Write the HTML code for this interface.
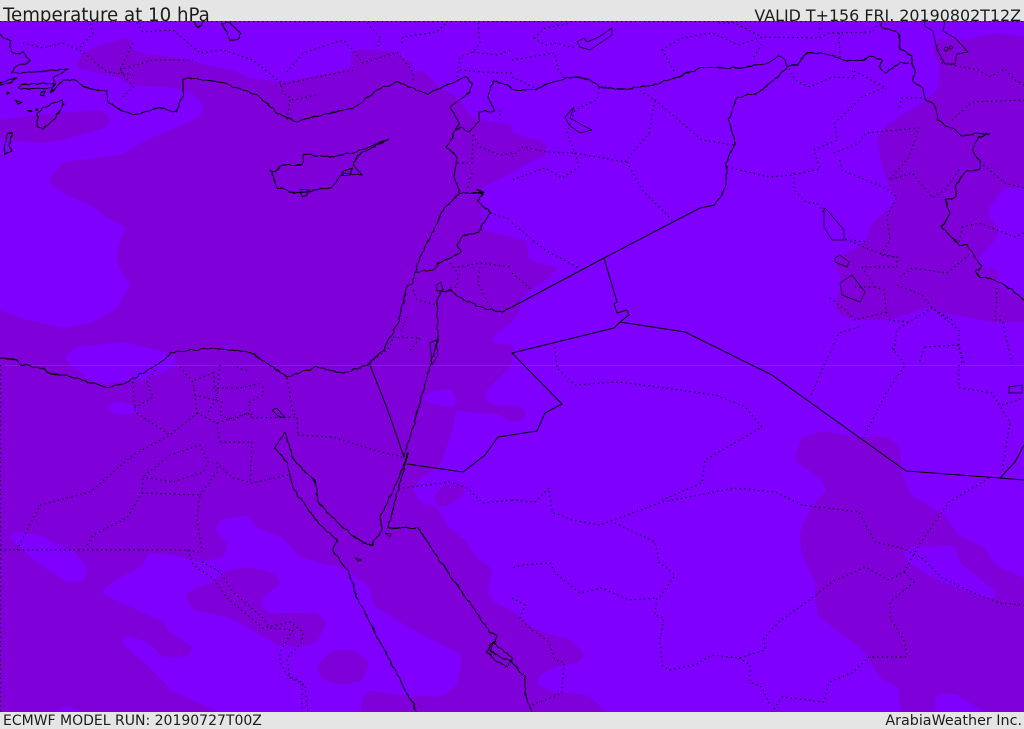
<!DOCTYPE html>
<html><head><meta charset="utf-8"><title>Temperature at 10 hPa</title>
<style>
html,body{margin:0;padding:0;background:#e5e5e5;width:1024px;height:729px;overflow:hidden}
#p{position:relative;width:1024px;height:729px;overflow:hidden;background:#e5e5e5;font-family:"DejaVu Sans",sans-serif;color:#1c1c1c;white-space:nowrap}
#p div{position:absolute;line-height:1}
svg{position:absolute;left:0;top:0;overflow:hidden}
.c{fill:none;stroke:#000;stroke-width:1;stroke-linejoin:round}
.t{fill:none;stroke:#000;stroke-width:.7;stroke-linejoin:round}
.d{fill:none;stroke:#000;stroke-width:1.2;stroke-dasharray:1.2 3.4}
</style></head><body><div id="p">
<div style="left:3px;top:7px;font-size:18.2px">Temperature at 10 hPa</div>
<div style="right:3px;top:7.5px;font-size:15.9px">VALID T+156 FRI. 20190802T12Z</div>
<svg width="1024" height="729" viewBox="0 0 1024 729">
<defs>
<clipPath id="m"><rect x="0" y="21" width="1024" height="691"/></clipPath>
<filter id="s" filterUnits="userSpaceOnUse" x="-30" y="0" width="1084" height="729"><feGaussianBlur stdDeviation="2"/><feComponentTransfer><feFuncA type="linear" slope="8" intercept="-3.5"/></feComponentTransfer></filter>
<filter id="w" filterUnits="userSpaceOnUse" x="-10" y="0" width="1044" height="729"><feTurbulence type="fractalNoise" baseFrequency=".16" numOctaves="2" seed="4"/><feDisplacementMap in="SourceGraphic" scale="3.5" xChannelSelector="R" yChannelSelector="G"/></filter>
</defs>
<g clip-path="url(#m)">
<rect x="0" y="21" width="1024" height="691" fill="#7f00ff"/>
<g fill="#7f00d9" filter="url(#s)">
<path d="M-20,310L0,310 20,318 63,328 93,322 117,308 130,285 117,263 117,247 126,227 107,218 93,207 63,193 48,180 63,162 120,155 147,140 200,117 204,105 190,92 167,87 130,85 117,77 77,68 77,65 80,55 100,45 130,37 132,50 143,53 173,57 207,65 233,70 250,78 280,82 320,75 350,68 353,50 377,50 397,53 415,65 405,72 423,71 433,80 440,88 458,97 470,115 480,120 512,125 512,133 539,140 548,147 545,155 512,172 480,190 483,230 512,237 527,240 529,260 560,268 532,290 520,300 520,310 512,322 492,337 492,343 512,345 517,348 512,353 512,365 485,392 487,402 500,406 512,405 522,407 527,413 522,420 512,422 497,414 477,413 457,410 450,438 440,465 417,482 413,490 420,502 437,507 447,525 467,542 475,557 492,568 488,592 493,602 512,610 532,628 545,633 572,640 585,655 578,663 555,667 538,677 538,685 555,692 588,695 607,712 620,729 -20,729Z"/>
<path d="M-20,120L0,120 33,115 100,110 110,117 107,127 63,140 40,143 0,139 -20,139Z"/>
<path d="M932,50L939,38 962,40 995,33 1024,37 1044,37 1044,187 1024,187 1005,188 989,207 989,217 1000,228 995,240 979,257 982,267 997,270 1000,287 1024,297 1044,297 1044,322 1024,322 992,322 945,313 929,307 889,320 862,320 842,317 835,307 842,283 835,260 865,242 872,223 897,200 889,187 880,157 877,137 889,123 922,103 937,90 940,67Z"/>
<path d="M794,460L802,437 822,431 859,437 889,437 900,448 902,472 910,495 942,513 959,535 985,548 995,565 1024,578 1044,590 1044,729 980,729 959,695 939,693 935,729 905,729 899,698 899,688 880,678 865,652 817,615 815,582 802,555 799,535 810,508 827,490 819,477Z"/>
</g>
<g fill="#7f00ff" filter="url(#s)">
<path d="M100,593L113,582 143,565 148,553 173,555 200,562 223,557 228,545 215,530 220,520 247,515 257,528 283,538 300,557 347,570 370,588 373,605 410,628 462,655 457,685 440,697 400,695 367,690 360,712 358,729 230,729 220,712 173,692 147,665 120,642 127,635 147,642 163,657 187,657 193,648 170,632 163,622Z"/>
<path d="M9,537L20,531 43,537 74,552 88,568 84,581 67,582 46,569 26,553Z"/>
<path d="M106,407L117,401 143,408 130,415 113,413Z"/>
<path d="M64,357L77,347 123,342 170,353 178,365 145,380 97,384 72,367Z"/>
<path d="M421,398L433,391 450,389 456,397 454,408 433,404Z"/>
<path d="M902,553L912,547 955,545 959,562 979,578 997,592 992,600 969,592 942,582 912,565Z"/>
<path d="M936,729L935,695 955,694 985,712 1000,729Z"/>
<path d="M48,716L65,706 85,712 85,729 48,729Z"/>
</g>
<g fill="#7f00d9" filter="url(#s)">
<path d="M185,595L197,587 213,582 227,570 250,567 273,573 282,582 263,597 260,605 270,613 317,613 327,622 317,642 300,647 277,645 247,627 227,617 193,610Z"/>
<path d="M317,665L333,650 353,650 370,662 363,680 343,685 322,680Z"/>
<path d="M433,498L443,485 463,485 465,493 450,505 437,507Z"/>
<path d="M360,729L362,695 400,695 440,697 462,690 470,729Z"/>
</g>
<rect x="0" y="365" width="1024" height="1" fill="#a040ff" opacity=".35"/>
<g class="d">
<path d="M0,21.5H1024M.5,365V712M23,43L43,48 63,43 83,52 107,72 133,75M80,47L93,33 90,23M133,43L120,70 133,87 120,100M137,23L143,32 173,30 200,53 223,50 253,60 280,82 283,93 293,100 317,95M120,70L153,60 193,60M287,72L303,53 343,40 353,50 363,63 397,52 413,72 413,83M280,85L317,77 353,70M290,100L287,120M367,23L380,37 377,50M402,43L403,37 437,32 447,22M457,77L460,57 473,52 480,43 478,22M473,52L497,55 512,50M460,70L483,72 512,73"/>
<path d="M512,60L555,53 557,67 565,80M534,38L545,28 570,23M534,38L545,45 555,43 575,48M662,50L675,73M662,50L682,38 712,33 739,45 762,37 819,38 829,33 872,32 879,23M719,23L735,23 762,37M754,57L762,43M839,33L840,57M820,23L819,33M599,88L597,100 575,110 567,133 575,153 625,162 649,133 655,100 639,90M655,100L702,140 734,145M627,162L642,190 672,220M512,77L535,88M575,153L579,167 562,178 545,168 512,180M512,157L522,147 547,152 575,153"/>
<path d="M727,167L769,177 792,175 820,169 814,150 837,140 835,123 862,97 885,87 852,70 855,78 832,77 810,87 795,80 789,68M794,173L794,190 807,203 817,203 824,213M834,153L859,143 865,133 919,128 909,157 889,180 912,173 932,197M840,160L842,170 885,188 897,197 887,217 890,240 880,255 897,257 897,267 862,267 875,287 884,290 887,317M899,107L902,98 922,98M952,120L972,102 1024,100M937,45L942,63 979,70 989,77 1005,69 1015,80 1024,85M980,162L1005,183 1024,188M959,170L945,190 932,198M865,242L844,239 879,253 895,257M900,277L912,268 947,273 969,255M897,285L922,295 932,308 959,330 959,347 965,365M962,227L979,223 1015,237 1024,233M962,227L959,243M997,288L995,320 1002,320 1012,363M830,298L845,310 855,320 887,312M855,287L875,287M859,327L839,333 824,365 810,398M889,320L909,322 932,308 952,320M894,350L897,330 909,322M892,348L905,365 885,395 865,435M925,347L959,345 962,363M925,347L919,363M959,365L959,388 992,393 1010,422 1002,472M1002,405L1024,398"/>
<path d="M555,347L557,368 575,385 619,382 665,388 715,395 745,407 762,427 705,460 702,483 662,500M512,500L535,502 549,488 552,512 572,520 600,525 662,502 735,488 775,492 802,505 859,512 875,542 902,548 922,558 942,578 972,592 999,603 1024,605M989,478L949,502 919,545 904,572 889,580 865,567 832,582 812,598 779,622 764,638 765,650 739,658 712,655 695,665 669,670 662,665 660,638 664,618 655,615 657,598 629,600 602,588 580,593 555,573 550,563 522,565 512,568M904,572L914,582 890,602 890,618 905,642 907,657 869,657 852,673 829,682 824,702 782,697 772,712M739,658L750,665 750,682 762,687 770,705M615,523L655,542 659,562 675,575 659,598M512,598L525,605 520,618 532,630 549,642 555,660 564,662 562,693 532,705"/>
<path d="M0,550H188L202,553M17,550L40,505 90,492 133,455 170,435 197,413M87,545L93,535 127,518 142,493 143,477 170,455 200,445 208,462 203,472 173,482 143,477M142,493L200,495 197,518 202,552M200,495L217,472 217,463 233,478 252,483 288,475M220,442L252,442 250,482M217,423L220,442M252,418L297,417 298,433M287,378L293,412 297,417M197,413L217,423 248,413 252,418 248,403 263,395 263,383M133,382L135,412 170,435M135,408L153,397 147,382 157,368M180,367L193,382 197,413M195,380L213,373 217,398 208,412M195,395L222,402 220,415 233,420 248,413M220,365L217,398M237,367L250,372M213,388L240,388 263,383M298,435L333,437 367,448 402,457M188,550L193,565 213,578 227,598 263,628 290,622 303,632 302,642 287,658 290,678 305,685 308,712M202,562L220,572 233,592 263,618 270,628 293,630 280,652 280,662 287,675 302,682 302,712M403,488L450,482 467,488 483,503 512,500"/>
<path d="M413,290L417,300 437,305M393,337L420,338 408,353M407,317L400,333M370,363L390,347 393,337M450,263L458,273 457,287 450,288M458,267L480,263 512,267M480,267L478,283 490,307M473,135L472,163 457,163M473,135L480,147 500,155 512,153M472,173L467,190M500,110L500,120M512,223L545,250 579,268M512,273L532,290M490,213L512,220"/>
</g>
<g class="c">
<path d="M404,457L387,408 370,365M604,258L700,208 715,205M512,307L604,258 617,302 614,304 617,313 627,310 629,315 620,322 614,328 512,353 562,404 545,413 537,431 498,437 485,455 463,472 407,464"/>
<path d="M620,322L685,332 772,375 906,471 1000,478 1024,480M1000,478L1015,462 1024,445"/>
</g>
<g class="c" filter="url(#w)">
<path d="M0,34L2,38 10,41 11,53 20,54 22,51 30,61 25,64 15,66 12,73 23,73 68,69 53,78 55,84 50,93 63,81 73,79 83,86 97,91 107,91 108,101 117,108 133,115 160,108 177,112 183,93 183,80 190,78 220,82 257,95 277,113 297,122 313,117 353,108 363,102 377,90 397,82 428,94 442,87 453,83 465,77 472,83 470,92 450,107 459,123 455,130 447,147 457,157 454,177 460,193 443,210 433,232 420,258 415,272 413,283 407,287 398,323 383,350 367,365 343,373 317,367 287,377 270,365 250,352 210,348 172,353 157,365 127,382 107,388 73,377 47,373 43,368 20,365 17,360 0,358"/>
<path d="M408,453L397,482 380,518 382,530 372,545 363,543 340,525 318,502 315,482 293,458 285,432 275,448 287,462 293,488 320,525 337,540 333,550 350,575 357,598 417,712"/>
<path d="M408,453L388,528 418,528 450,575 490,632 497,635 490,652 512,662 525,677 525,695 532,712"/>
<path d="M404,457L425,385 430,365 438,340 437,300 440,293 450,290 467,302 483,308 503,312 512,307M715,205L727,185 726,163 735,143 729,120 737,97 759,93 787,68"/>
<path d="M460,193L483,193 477,190 483,195 477,201 491,213 483,223 479,233 463,235 457,245 462,252 450,258 437,263 435,270 415,272"/>
<path d="M455,130L460,127 469,132 479,122 479,112 495,111 488,98 493,81 510,85 512,90 535,90 549,83 574,77 590,80 599,87 625,89 652,85 675,78 702,67 725,68 742,68 769,63 779,56 785,60 787,67 797,65 807,53 824,53 845,60 862,61 870,56 882,60 880,68 885,73 900,63 910,63"/>
<path d="M880,22L882,27 899,33 900,50 907,52 912,56 912,64 915,71 913,81 923,88 925,99 935,104 938,121 957,131 960,136 975,134 990,133 978,138 972,150 980,162 980,170 965,172 955,187 957,197 945,200 950,213 942,227 959,245 967,245 982,267 975,272 980,278 992,279 1009,288 1024,300"/>
<path d="M388,140L353,153 330,157 304,154 303,165 283,165 275,172 270,170 277,187 293,193 307,192 333,187 342,173 362,175 353,165 358,155Z"/>
<path d="M37,114L43,108 62,100 63,104 55,119 43,129 37,126 38,118ZM8,133L12,133 10,146 12,151 4,154 5,143ZM18,88L23,84 53,83 53,88 33,89 20,89ZM0,83L17,78 10,83 0,85ZM40,93L45,91 44,96 40,95ZM7,92L10,93 7,94ZM15,100L22,103 18,104ZM27,111L32,111 29,112ZM36,108L37,110 35,110ZM222,23L230,23 240,33 240,38 230,41ZM193,21L199,28 203,21M342,172L352,168 350,176 342,176ZM300,190L308,190 306,196 302,196Z"/>
<path d="M487,652L493,642 512,658 507,667 495,660Z"/>
</g>
<g class="t">
<path d="M565,117L574,107 570,118 584,126 592,130 580,133 569,125ZM577,42L584,38 587,42 599,37 612,28 612,35 590,50 580,47ZM824,208L827,210 844,230 844,240 832,240 824,227ZM835,258L840,255 849,262 847,267 835,262ZM852,275L865,292 860,302 842,295 840,283ZM924,21L925,26 933,31 937,50 945,64 955,64 957,54 968,52 955,38 943,31 945,21M946,47a2,2 0 1,0 .1,0M951,46a1.5,1.5 0 1,0 .1,0M1009,387L1022,385 1022,393 1009,393ZM272,410L277,408 285,418 278,416ZM355,558L362,560 358,561ZM385,533L391,534 390,537ZM436,285L441,282 443,290 437,291ZM430,343L436,340 438,355 432,365Z"/>
</g>
</g>
</svg>
<div style="left:3px;top:714px;font-size:14px">ECMWF MODEL RUN: 20190727T00Z</div>
<div style="right:2px;top:714px;font-size:14.3px">ArabiaWeather Inc.</div>
</div></body></html>
